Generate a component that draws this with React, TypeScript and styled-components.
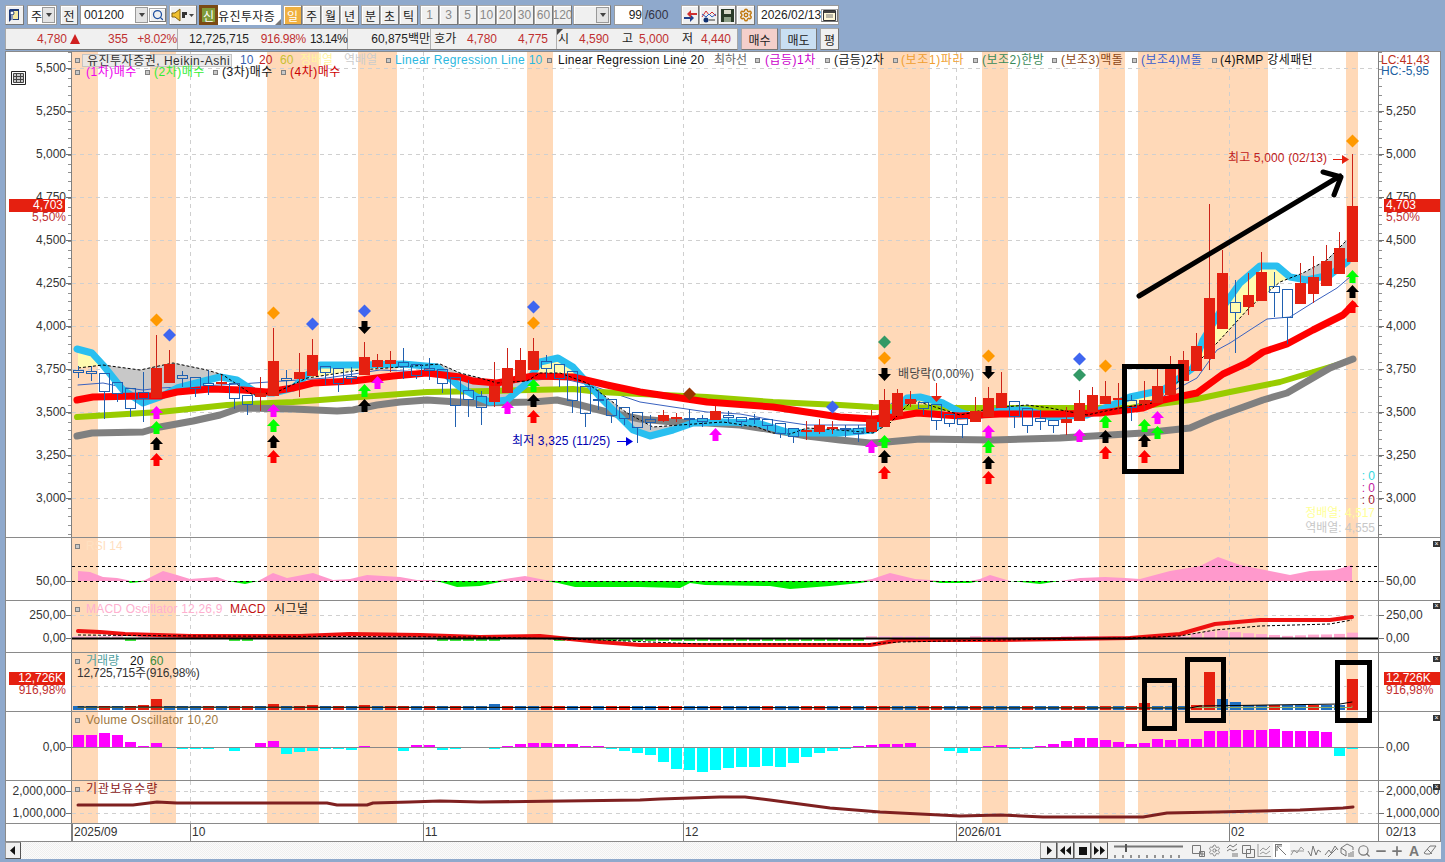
import React from "react";
import styled, { createGlobalStyle } from "styled-components";
import { Search, Settings, Minus, Plus } from "lucide-react";

const FONT = `"Liberation Sans", "Noto Sans CJK KR", sans-serif`;
const BAND = "#FFD9B8";
const RED = "#E52010";
const BLUE = "#2060B0";

type Pt = [number, number];

const Global = createGlobalStyle`
  html, body { margin: 0; padding: 0; background: #8FA9CC; }
  body { font-family: ${FONT}; font-size: 12px; color: #222; overflow: hidden; }
`;

const Page = styled.div`
  width: 1445px;
  height: 862px;
  display: flex;
  flex-direction: column;
  background: #8FA9CC;
`;

/* ---------- top toolbar ---------- */
const Toolbar = styled.div`
  display: flex;
  height: 20px;
  margin-top: 5px;
  padding-left: 5px;
  align-items: stretch;
`;

const Btn = styled.div<{ $w: number; $ml?: number; $off?: boolean; $on?: boolean }>`
  box-sizing: border-box;
  width: ${(p) => p.$w}px;
  margin-left: ${(p) => p.$ml || 0}px;
  display: flex;
  align-items: center;
  justify-content: center;
  background: ${(p) => (p.$on ? "#F0B040" : "#F0F0F0")};
  color: ${(p) => (p.$on ? "#fff" : p.$off ? "#888" : "#222")};
  border: 1px solid #A8A8A8;
  border-right-color: #777;
  border-bottom-color: #777;
  box-shadow: inset 1px 1px 0 #fff;
  overflow: hidden;
`;

const WhiteBox = styled.div<{ $w: number; $ml?: number }>`
  box-sizing: border-box;
  width: ${(p) => p.$w}px;
  margin-left: ${(p) => p.$ml || 0}px;
  display: flex;
  align-items: center;
  background: #fff;
  border: 1px solid #9A9A9A;
  padding-left: 3px;
  overflow: hidden;
`;

const Grow = styled.span`
  flex: 1;
  white-space: nowrap;
`;

const DropBtn = styled.div`
  width: 13px;
  height: 16px;
  flex: none;
  margin-right: 1px;
  display: flex;
  align-items: center;
  justify-content: center;
  background: #E4E4E4;
  border: 1px solid #999;
  box-sizing: border-box;
  &::after {
    content: "";
    border: 3px solid transparent;
    border-top: 4px solid #444;
    margin-top: 3px;
  }
`;

const NameBox = styled.div`
  box-sizing: border-box;
  width: 63px;
  display: flex;
  align-items: center;
  overflow: hidden;
  background: #fff;
  white-space: nowrap;
  font-size: 12px;
  letter-spacing: 0.4px;
  position: relative;
  &::after {
    content: "";
    position: absolute;
    right: 0;
    bottom: 0;
    border: 3px solid transparent;
    border-right-color: #777;
    border-bottom-color: #777;
  }
`;

const NewBtn = styled.div`
  box-sizing: border-box;
  width: 19px;
  margin-left: 2px;
  display: flex;
  align-items: center;
  justify-content: center;
  color: #fff;
  background: #7F9B3A;
  border: 3px solid #7B4A14;
`;

const TotalText = styled.span`
  width: 36px;
  margin-left: 2px;
  color: #334;
  line-height: 20px;
`;

const Glyph = styled.svg`
  display: block;
  flex: none;
`;

/* ---------- quote row ---------- */
const QuoteRow = styled.div`
  display: flex;
  height: 22px;
  margin-top: 3px;
  padding-left: 5px;
`;

const QuoteBar = styled.div`
  box-sizing: border-box;
  width: 733px;
  display: flex;
  align-items: center;
  background: #F0F0F0;
  border: 1px solid #A8A8A8;
  border-bottom-color: #777;
`;

const Val = styled.span<{ $w: number; $c?: string; $left?: boolean; $line?: boolean; $ls?: number }>`
  box-sizing: border-box;
  width: ${(p) => p.$w}px;
  height: 100%;
  line-height: 20px;
  text-align: ${(p) => (p.$left ? "left" : "right")};
  color: ${(p) => p.$c || "#222"};
  letter-spacing: ${(p) => p.$ls || 0}px;
  white-space: nowrap;
  border-right: ${(p) => (p.$line ? "1px solid #B0B0B0" : "none")};
`;

const UpMark = styled.span`
  flex: none;
  width: 0;
  height: 0;
  margin: 0 1px 0 3px;
  border-left: 5px solid transparent;
  border-right: 5px solid transparent;
  border-bottom: 10px solid #D02020;
`;

const OpenLabel = styled.span`
  position: relative;
  flex: none;
  width: 14px;
  height: 100%;
  margin-left: 8px;
  line-height: 20px;
  padding-left: 1px;
  box-sizing: border-box;
  white-space: nowrap;
  border-left: 1px solid #B0B0B0;
  &::before {
    content: "";
    position: absolute;
    left: 0;
    top: 0;
    border: 3px solid transparent;
    border-left-color: #444;
    border-top-color: #444;
  }
`;

const Trade = styled.div<{ $w: number; $bg: string; $ml: number }>`
  box-sizing: border-box;
  width: ${(p) => p.$w}px;
  margin-left: ${(p) => p.$ml}px;
  display: flex;
  align-items: center;
  justify-content: center;
  background: ${(p) => p.$bg};
  border: 1px solid #A8A8A8;
  border-bottom-color: #777;
  border-right-color: #777;
`;

/* ---------- chart frame and panes ---------- */
const Frame = styled.div`
  position: relative;
  box-sizing: content-box;
  width: 1434px;
  margin: 1px 0 0 5px;
  border: 1px solid #8A8A8A;
  background: #fff;
`;

const Pane = styled.div<{ $h: number }>`
  display: grid;
  grid-template-columns: 66px 1306px 62px;
  height: ${(p) => p.$h}px;
  box-sizing: border-box;
  border-bottom: 1px solid #8A8A8A;
`;

const AxisCol = styled.div<{ $side: "l" | "r"; $minor?: boolean }>`
  position: relative;
  overflow: hidden;
  box-sizing: border-box;
  ${(p) => (p.$side === "l" ? "border-right: 1px solid #808080;" : "border-left: 1px solid #808080;")}
  ${(p) =>
    p.$minor
      ? `background-image: repeating-linear-gradient(to bottom, #909090 0 1px, transparent 1px 8.6px);
         background-size: 3px 100%;
         background-repeat: no-repeat;
         background-position: ${p.$side === "l" ? "right" : "left"} top;`
      : ""}
`;

const Tick = styled.span<{ $y: number; $side: "l" | "r"; $c?: string }>`
  position: absolute;
  top: ${(p) => p.$y}px;
  ${(p) => (p.$side === "l" ? "right: 5px;" : "left: 7px;")}
  transform: translateY(-50%);
  line-height: 12px;
  white-space: nowrap;
  color: ${(p) => p.$c || "#333"};
  &::after {
    content: "";
    position: absolute;
    top: 6px;
    width: 5px;
    height: 1px;
    background: #707070;
    ${(p) => (p.$side === "l" ? "right: -5px;" : "left: -7px;")}
  }
`;

const EndDate = styled.span`
  display: block;
  padding-left: 7px;
  line-height: 17px;
  color: #333;
`;

const PriceTag = styled.span<{ $y: number; $side: "l" | "r" }>`
  position: absolute;
  top: ${(p) => p.$y}px;
  ${(p) => (p.$side === "l" ? "left: 3px; width: 56px; text-align: right; padding-right: 2px;" : "left: 5px; width: 57px; padding-left: 2px;")}
  box-sizing: border-box;
  height: 13px;
  line-height: 13px;
  color: #fff;
  background: ${RED};
`;

const PriceSub = styled.span<{ $y: number; $side: "l" | "r" }>`
  position: absolute;
  top: ${(p) => p.$y}px;
  ${(p) => (p.$side === "l" ? "right: 5px;" : "left: 7px;")}
  line-height: 12px;
  color: #C03030;
`;

const Plot = styled.div`
  position: relative;
  overflow: hidden;
`;

const Legend = styled.div<{ $top?: number }>`
  position: absolute;
  top: ${(p) => p.$top ?? 2}px;
  left: 3px;
  display: flex;
  flex-direction: column;
`;

const LegendRow = styled.div`
  display: flex;
  align-items: center;
  height: 12px;
  line-height: 12px;
  white-space: nowrap;
`;

const Mark = styled.i<{ $gap: number }>`
  display: block;
  flex: none;
  box-sizing: border-box;
  width: 5px;
  height: 5px;
  margin-right: ${(p) => p.$gap}px;
  background: #C8C8C8;
  border: 1px solid #808080;
`;

const Item = styled.span<{ $w?: number; $c: string; $ls?: number }>`
  flex: none;
  ${(p) => (p.$w ? `width: ${p.$w}px;` : "")}
  color: ${(p) => p.$c};
  letter-spacing: ${(p) => p.$ls || 0}px;
`;

const NameTag = styled.span`
  flex: none;
  box-sizing: border-box;
  width: 150px;
  height: 13px;
  margin-right: 8px;
  line-height: 12px;
  padding-left: 4px;
  letter-spacing: 0.5px;
  color: #333;
  background: rgba(232, 232, 232, 0.85);
  border: 1px solid #C4C4C4;
`;

const Note = styled.div`
  margin: 0 0 0 2px;
  line-height: 12px;
  color: #333;
  letter-spacing: -0.2px;
  white-space: nowrap;
`;

const CornerNote = styled.div<{ $c: string; $y: number }>`
  position: absolute;
  top: ${(p) => p.$y}px;
  left: 2px;
  line-height: 11px;
  color: ${(p) => p.$c};
`;

const TableIcon = styled.svg`
  position: absolute;
  left: 5px;
  top: 19px;
`;

const CloseBox = styled.span<{ $y: number }>`
  position: absolute;
  right: 0;
  top: ${(p) => p.$y}px;
  width: 7px;
  height: 6px;
  background: #333;
  color: #fff;
  font-size: 7px;
  line-height: 6px;
  text-align: center;
`;

const ValueList = styled.div`
  position: absolute;
  right: 3px;
  top: 418px;
  display: flex;
  flex-direction: column;
  align-items: flex-end;
`;

const ValueRow = styled.span<{ $c: string; $h: number }>`
  height: ${(p) => p.$h}px;
  line-height: ${(p) => p.$h}px;
  color: ${(p) => p.$c};
  white-space: nowrap;
`;

const DateRow = styled.div`
  display: grid;
  grid-template-columns: 66px 1306px 62px;
  height: 17px;
`;

const DateLabel = styled.span<{ $x: number }>`
  position: absolute;
  left: ${(p) => p.$x}px;
  top: 0;
  height: 17px;
  line-height: 17px;
  padding-left: 1px;
  border-left: 1px solid #808080;
  color: #333;
`;

const OverBox = styled.div<{ $x: number; $y: number; $w: number; $h: number }>`
  position: absolute;
  left: ${(p) => p.$x - 6}px;
  top: ${(p) => p.$y - 52}px;
  width: ${(p) => p.$w}px;
  height: ${(p) => p.$h}px;
  box-sizing: border-box;
  border: 5px solid #000;
`;

const ChartSvg = styled.svg`
  display: block;
  font-family: ${FONT};
  font-size: 12px;
`;

/* ---------- bottom scroll row ---------- */
const ScrollRow = styled.div`
  display: flex;
  height: 17px;
  margin-left: 5px;
  width: 1436px;
  align-items: stretch;
`;

const ScrollBtn = styled.div<{ $w?: number }>`
  box-sizing: border-box;
  width: ${(p) => p.$w || 16}px;
  flex: none;
  display: flex;
  align-items: center;
  justify-content: center;
  background: #F0F0F0;
  border: 1px solid #999;
  border-right-color: #555;
  border-bottom-color: #555;
`;

const Track = styled.div`
  width: 1019px;
  flex: none;
  background: repeating-conic-gradient(#EFEFEF 0 25%, #FBFBFB 0 50%) 0 0 / 2px 2px;
`;

const ToolZone = styled.div`
  flex: 1;
  display: flex;
  align-items: center;
  background: #F2F2F2;
`;

const SliderSlot = styled.span`
  flex: none;
  margin: 0 5px;
  width: 72px;
`;

const ToolIcon = styled.span<{ $on?: boolean }>`
  width: 16.6px;
  height: 16px;
  flex: none;
  display: flex;
  align-items: center;
  justify-content: center;
  color: #777;
  background: ${(p) => (p.$on ? "#fff" : "transparent")};
  font-weight: 700;
  font-size: 14px;
`;

/* ---------- data ---------- */
const X0 = 78.5;
const STEP = 13;
const bx = (i: number) => X0 + i * STEP;

// top of body, bottom of body, top of wick, bottom of wick, colour
const CANDLES: [number, number, number, number, "r" | "b"][] = [
  [370, 372, 366, 378, "b"], [371, 373, 366, 381, "b"], [373, 391, 373, 419, "b"], [382, 393, 382, 402, "b"],
  [388, 408, 388, 417, "b"], [392, 398, 372, 422, "b"], [368, 398, 335, 398, "r"], [364, 383, 350, 383, "r"],
  [375, 378, 371, 387, "b"], [377, 388, 377, 397, "b"], [383, 385, 370, 395, "b"], [382, 384, 375, 390, "r"],
  [383, 398, 383, 409, "b"], [395, 404, 395, 415, "b"], [393, 397, 377, 411, "r"], [361, 396, 328, 396, "r"],
  [378, 380, 370, 392, "b"], [372, 379, 353, 397, "r"], [355, 376, 339, 376, "r"], [366, 372, 366, 385, "b"],
  [368, 383, 368, 392, "b"], [376, 378, 367, 383, "b"], [357, 375, 342, 375, "r"], [360, 367, 354, 369, "r"],
  [360, 364, 351, 372, "r"], [362, 366, 348, 379, "b"], [364, 375, 364, 379, "b"], [368, 370, 358, 380, "b"],
  [369, 383, 369, 393, "b"], [377, 405, 377, 427, "b"], [390, 399, 380, 417, "b"], [396, 407, 391, 425, "b"],
  [386, 402, 362, 407, "r"], [368, 393, 348, 393, "r"], [360, 380, 348, 380, "r"], [351, 370, 338, 370, "r"],
  [361, 368, 355, 378, "b"], [364, 378, 364, 387, "b"], [371, 400, 371, 413, "b"], [386, 413, 386, 427, "b"],
  [399, 400, 390, 410, "b"], [399, 415, 399, 423, "b"], [407, 418, 407, 425, "b"], [412, 427, 412, 443, "b"],
  [419, 422, 415, 430, "b"], [415, 421, 410, 422, "r"], [417, 419, 413, 422, "r"], [418, 419, 409, 427, "b"],
  [418, 421, 415, 427, "b"], [411, 420, 406, 420, "r"], [415, 417, 411, 423, "b"], [417, 421, 417, 427, "b"],
  [418, 419, 414, 424, "b"], [419, 425, 419, 431, "b"], [423, 433, 423, 438, "b"], [428, 436, 428, 443, "b"],
  [430, 431, 421, 440, "r"], [425, 432, 419, 434, "r"], [427, 428, 421, 434, "r"], [428, 429, 425, 437, "b"],
  [428, 433, 425, 442, "b"], [419, 432, 410, 432, "r"], [400, 427, 389, 427, "r"], [393, 416, 389, 416, "r"],
  [399, 404, 391, 407, "r"], [402, 408, 402, 415, "b"], [404, 420, 404, 430, "b"], [414, 423, 414, 427, "b"],
  [418, 424, 418, 438, "b"], [411, 422, 397, 422, "r"], [398, 417, 387, 417, "r"], [393, 408, 372, 408, "r"],
  [401, 416, 401, 428, "b"], [408, 425, 408, 433, "b"], [418, 421, 410, 430, "b"], [420, 425, 420, 433, "b"],
  [419, 423, 407, 435, "r"], [403, 421, 390, 421, "r"], [395, 412, 387, 412, "r"], [396, 404, 381, 404, "r"],
  [398, 400, 383, 413, "r"], [400, 407, 395, 421, "b"], [400, 404, 381, 410, "r"], [386, 403, 369, 403, "r"],
  [369, 395, 356, 395, "r"], [360, 381, 351, 381, "r"], [346, 371, 333, 371, "r"], [298, 359, 204, 370, "r"],
  [273, 329, 250, 329, "r"], [302, 312, 280, 353, "b"], [295, 307, 273, 315, "r"], [272, 301, 252, 301, "r"],
  [286, 292, 272, 317, "b"], [289, 317, 289, 344, "b"], [283, 304, 263, 304, "r"], [277, 294, 256, 303, "r"],
  [261, 286, 245, 286, "r"], [248, 274, 232, 274, "r"], [206, 262, 154, 262, "r"],
];

const GRAY: Pt[] = [[77,436],[92,433],[143,432],[160,427],[193,421],[220,415],[240,408],[293,409],[337,411],[353,410],[377,405],[400,402],[427,400],[473,403],[533,402],[557,400],[580,405],[607,412],[640,419],[673,422],[707,423],[740,425],[773,430],[807,436],[840,440],[870,443],[887,442],[920,439],[993,440],[1060,438],[1110,435],[1143,433],[1190,428],[1213,418],[1263,400],[1287,393],[1330,368],[1353,359]];
const OLIVE: Pt[] = [[77,417],[160,412],[227,405],[293,402],[360,397],[427,392],[490,391],[573,389],[600,392],[640,394],[707,397],[773,402],[840,405],[873,407],[957,408],[1040,408],[1100,408],[1130,408],[1197,399],[1230,392],[1280,382],[1330,367],[1343,363]];
const REDLINE: Pt[] = [[77,400],[93,397],[140,396],[160,396],[177,392],[210,389],[243,390],[267,392],[293,388],[313,383],[353,381],[393,376],[427,373],[460,377],[473,381],[497,383],[533,376],[573,377],[607,385],[640,392],[707,402],[773,407],[840,417],[873,419],[893,417],[917,413],[960,416],[1000,414],[1060,414],[1100,413],[1143,408],[1163,400],[1197,393],[1223,374],[1247,363],[1263,352],[1287,344],[1313,330],[1343,315],[1353,305]];
const CYAN: Pt[] = [[77,349],[92,353],[103,365],[123,390],[143,403],[160,397],[177,388],[200,382],[220,377],[237,380],[257,393],[273,393],[293,388],[307,375],[320,365],[360,365],[403,364],[437,367],[460,387],[477,397],[490,402],[507,400],[527,383],[540,362],[558,358],[573,367],[600,397],[633,430],[650,436],[673,430],[693,423],[723,422],[757,423],[787,432],[807,433],[840,433],[873,430],[888,418],[907,398],[920,397],[943,403],[960,412],[975,417],[1000,410],[1027,410],[1050,417],[1087,415],[1117,403],[1130,397],[1163,390],[1193,368],[1203,340],[1223,307],[1240,283],[1260,266],[1277,266],[1290,277],[1307,280],[1330,275],[1347,262]];
const DASH: Pt[] = [[78,368],[103,365],[140,370],[173,363],[207,370],[223,375],[253,395],[277,392],[307,378],[360,370],[427,365],[440,364],[460,373],[480,378],[497,383],[527,381],[540,373],[560,373],[587,383],[610,400],[627,413],[653,427],[680,425],[723,422],[757,427],[773,433],[790,434],[807,428],[840,430],[873,433],[890,423],[913,400],[960,415],[993,408],[1027,405],[1050,408],[1087,415],[1120,408],[1153,403],[1180,380],[1217,343],[1250,307],[1280,282],[1303,273],[1327,260],[1347,240]];
const THIN: Pt[] = [[78,385],[103,383],[127,388],[143,390],[160,388],[240,384],[327,378],[380,370],[427,372],[460,377],[500,383],[560,378],[590,385],[613,393],[640,402],[673,407],[707,412],[740,414],[773,420],[807,425],[867,425],[893,402],[960,416],[1093,413],[1127,407],[1160,398],[1173,391],[1197,378],[1217,350],[1230,343],[1253,328],[1267,319],[1290,317],[1317,300],[1337,288],[1350,277]];

const RSI: Pt[] = [[78,10],[90,9],[103,4],[117,3],[127,1],[130,-2],[140,-1],[145,1],[163,10],[177,6],[190,2],[217,4],[228,0],[245,-3],[258,0],[273,8],[287,3],[313,8],[333,1],[350,2],[367,6],[400,4],[417,1],[433,1],[440,-1],[447,-3],[457,-6],[480,-5],[495,-2],[505,2],[525,5],[545,1],[558,-2],[575,-6],[640,-6],[680,-7],[690,-2],[705,-4],[770,-5],[790,-8],[830,-5],[860,-2],[872,2],[890,8],[915,2],[930,1],[940,-2],[970,-2],[980,2],[990,6],[1010,0],[1040,-3],[1060,0],[1080,3],[1105,4],[1125,3],[1140,2],[1170,10],[1200,15],[1218,24],[1240,16],[1270,10],[1290,6],[1310,10],[1335,11],[1352,16]];

const MACD: Pt[] = [[78,631],[100,632],[125,634],[190,636],[300,636],[350,634],[420,635],[480,637],[540,636],[600,642],[640,645],[800,645],[870,645],[900,640],[1000,640],[1130,638],[1180,634],[1215,624],[1260,620],[1330,620],[1352,617]];
const SIGNAL: Pt[] = [[78,635],[200,636],[480,637],[600,640],[700,644],[870,644],[900,642],[1000,640],[1130,638],[1180,636],[1215,630],[1260,626],[1330,624],[1352,620]];

const INST: Pt[] = [[78,805],[133,805],[157,802],[177,803],[327,803],[337,805],[367,805],[373,803],[410,802],[440,801],[480,802],[640,800],[660,799],[720,797],[745,797],[770,800],[830,808],[880,812],[960,816],[1000,815],[1043,817],[1143,817],[1167,813],[1217,812],[1300,810],[1343,808],[1353,807]];

// volume follows the real candles, so its colours differ from the Heikin-Ashi bodies
const VOL_H: Record<number, number> = { 5: 5, 6: 11, 15: 6, 17: 4, 18: 5, 22: 5, 24: 4, 32: 6, 45: 4, 49: 4, 62: 4, 70: 4, 82: 7, 86: 5, 87: 38, 88: 11, 89: 8, 90: 5, 91: 5, 92: 5, 93: 5, 94: 5, 95: 5, 96: 5, 97: 5, 98: 31 };
const VOL_LEFT = "bbrbrrrbbbrbrrbrbrrbrbrbrrbrbrb";
const VOL_RIGHT = "brrbbrrbbrbbbrbbrrbr";
const volColor = (i: number) => {
  if (i < VOL_LEFT.length) return VOL_LEFT[i];
  if (i >= 84) return "bbrrbbbbrbbrbbr"[i - 84] || "r";
  return VOL_RIGHT[i % VOL_RIGHT.length];
};

const VO = [12,12,14,12,5,1,4,0,-1,-1,-1,0,-3,0,4,6,-6,-4,-3,-1,-1,-2,1,0,0,-3,2,2,-2,-1,0,0,-1,1,3,4,4,3,3,1,1,-1,-3,-5,-7,-14,-21,-22,-24,-22,-20,-19,-19,-18,-19,-15,-9,-5,-3,-1,1,2,3,3,4,0,0,-3,-5,-3,1,2,-1,-1,1,3,6,9,9,7,5,3,4,8,7,8,8,16,16,17,17,17,18,16,16,16,15,-8,-1];

const BANDS: Pt[] = [[72,98],[150,176],[267,319],[358,397],[527,553],[878,930],[982,1008],[1099,1125],[1138,1268],[1346,1358]];
const MONTHS = [190, 423, 683, 956, 1229];

type ArrowKind = "red" | "black" | "lime" | "mag";
const ARROW_FILL: Record<ArrowKind, string> = { red: "#FF0000", black: "#000000", lime: "#00FF00", mag: "#FF00FF" };

const UP: [number, number, ArrowKind][] = [
  [156.5,413,"mag"],[156.5,428,"lime"],[156.5,444,"black"],[156.5,460,"red"],
  [273.5,411,"mag"],[273.5,426,"lime"],[273.5,442,"black"],[273.5,457,"red"],
  [364.5,391,"lime"],[364.5,406,"black"],[377.5,383,"mag"],
  [507.5,408,"mag"],[533.5,386,"lime"],[533.5,401,"black"],[533.5,417,"red"],
  [715.5,435,"mag"],[871.5,447,"mag"],
  [884.5,442,"lime"],[884.5,457,"black"],[884.5,473,"red"],
  [988.5,432,"mag"],[988.5,447,"lime"],[988.5,463,"black"],[988.5,478,"red"],
  [1079.5,436,"mag"],[1105.5,422,"lime"],[1105.5,437,"black"],[1105.5,453,"red"],
  [1144.5,426,"lime"],[1144.5,441,"black"],[1144.5,457,"red"],
  [1157.5,418,"mag"],[1157.5,433,"lime"],
  [1352.5,277,"lime"],[1352.5,292,"black"],[1352.5,307,"red"],
];

const DOWN: Pt[] = [[364.5,327],[884.5,374],[988.5,372]];

const DIAMONDS: [number, number, string][] = [
  [156.5,320,"#FF9900"],[169.5,335,"#3F66F0"],[273.5,313,"#FF9900"],[312.5,324,"#3F66F0"],
  [364.5,311,"#3F66F0"],[533.5,307,"#3F66F0"],[533.5,323,"#FF9900"],[689.5,394,"#993300"],
  [832.5,407,"#3F66F0"],[884.5,342,"#339966"],[884.5,358,"#FF9900"],[988.5,356,"#FF9900"],
  [1079.5,359,"#3F66F0"],[1079.5,375,"#339966"],[1105.5,366,"#FF9900"],[1352.5,141,"#FF9900"],
];

const PRICE_TICKS: [number, string][] = [
  [68,"5,500"],[111,"5,250"],[154,"5,000"],[197,"4,750"],[240,"4,500"],[283,"4,250"],
  [326,"4,000"],[369,"3,750"],[412,"3,500"],[455,"3,250"],[498,"3,000"],
];

const poly = (pts: Pt[]) => "M" + pts.map((p) => p.join(",")).join("L");

const lerp = (pts: Pt[], x: number) => {
  if (x <= pts[0][0]) return pts[0][1];
  for (let i = 1; i < pts.length; i++) {
    if (x <= pts[i][0]) {
      const [x0, y0] = pts[i - 1];
      const [x1, y1] = pts[i];
      return y0 + ((y1 - y0) * (x - x0)) / (x1 - x0);
    }
  }
  return pts[pts.length - 1][1];
};

// areas between the fast line and the dashed line, yellow or grey by which lies on top
const fillRuns = () => {
  const runs: { d: string; c: string }[] = [];
  let top: Pt[] = [];
  let bot: Pt[] = [];
  let cur = 0;
  const close = () => {
    if (top.length > 1) runs.push({ d: poly([...top, ...bot.reverse()]) + "Z", c: cur < 0 ? "#FFFBB0" : "#C8C8C8" });
    top = [];
    bot = [];
  };
  for (let x = 78; x <= 1347; x++) {
    const c = lerp(CYAN, x);
    const d = lerp(DASH, x);
    const s = c < d ? -1 : 1;
    if (s !== cur) {
      close();
      cur = s;
    }
    top.push([x, Math.min(c, d)]);
    bot.push([x, Math.max(c, d)]);
  }
  close();
  return runs;
};

const Backdrop = ({ top, h, grid = [] }: { top: number; h: number; grid?: number[] }) => (
  <>
    {BANDS.map(([a, b]) => (
      <rect key={a} x={a} y={top} width={b - a} height={h} fill={BAND} />
    ))}
    {MONTHS.map((x) => (
      <line key={x} x1={x + 0.5} x2={x + 0.5} y1={top} y2={top + h} stroke="#CFCFCF" strokeDasharray="4 4" />
    ))}
    {grid.map((y) => (
      <line key={y} x1={72} x2={1378} y1={y + 0.5} y2={y + 0.5} stroke="#CFCFCF" strokeDasharray="4 4" />
    ))}
  </>
);

const Line = ({ pts, c, w, dash }: { pts: Pt[]; c: string; w: number; dash?: string }) => (
  <path d={poly(pts)} fill="none" stroke={c} strokeWidth={w} strokeDasharray={dash} strokeLinecap={dash ? "butt" : "round"} strokeLinejoin="round" />
);

const Candle = ({ i }: { i: number }) => {
  const [t, b, wt, wb, k] = CANDLES[i];
  const x = bx(i);
  if (k === "r") {
    return (
      <g>
        <line x1={x} x2={x} y1={wt} y2={wb} stroke="#CC2218" />
        <rect x={x - 5.5} y={t} width={11} height={Math.max(b - t, 2)} fill={RED} />
      </g>
    );
  }
  return (
    <g>
      {wt < t && <line x1={x} x2={x} y1={wt} y2={t} stroke={BLUE} />}
      <line x1={x} x2={x} y1={b} y2={wb} stroke={BLUE} />
      <rect x={x - 5} y={t + 0.5} width={10} height={Math.max(b - t, 1)} fill="none" stroke={BLUE} />
    </g>
  );
};

const UpArrow = ({ x, y, c }: { x: number; y: number; c: string }) => (
  <path d={`M${x},${y - 7}L${x + 6.5},${y}H${x + 3}V${y + 6}H${x - 3}V${y}H${x - 6.5}Z`} fill={c} />
);

const DownArrow = ({ x, y }: { x: number; y: number }) => (
  <path d={`M${x},${y + 7}L${x + 6.5},${y}H${x + 3}V${y - 6}H${x - 3}V${y}H${x - 6.5}Z`} fill="#000" />
);

const Diamond = ({ x, y, c }: { x: number; y: number; c: string }) => (
  <path d={`M${x},${y - 6.5}L${x + 6.5},${y}L${x},${y + 6.5}L${x - 6.5},${y}Z`} fill={c} />
);

const MainChart = () => (
  <ChartSvg width={1306} height={485} viewBox="72 52 1306 485">
    <Backdrop top={52} h={485} grid={PRICE_TICKS.map((t) => t[0])} />
    {fillRuns().map((r, i) => (
      <path key={i} d={r.d} fill={r.c} />
    ))}
    <Line pts={THIN} c="#3A62C0" w={1} />
    <Line pts={OLIVE} c="#99CC00" w={6} />
    <Line pts={GRAY} c="#808080" w={7} />
    <Line pts={CYAN} c="#29BFF0" w={7} />
    <Line pts={REDLINE} c="#FF0000" w={7} />
    <Line pts={DASH} c="#000" w={1} dash="3 2" />
    {CANDLES.map((_, i) => (
      <Candle key={i} i={i} />
    ))}
    {UP.map(([x, y, k], i) => (
      <UpArrow key={i} x={x} y={y} c={ARROW_FILL[k]} />
    ))}
    {DOWN.map(([x, y]) => (
      <DownArrow key={x} x={x} y={y} />
    ))}
    {DIAMONDS.map(([x, y, c], i) => (
      <Diamond key={i} x={x} y={y} c={c} />
    ))}
    <path d="M936.5,383V397" stroke="#E52010" />
    <path d="M931,396H942L936.5,402Z" fill="#E52010" />
    <text x={898} y={378} fill="#444" letterSpacing={0.1}>배당락(0,00%)</text>
    <text x={1228} y={162} fill="#C02020" letterSpacing={0.15}>최고 5,000 (02/13)</text>
    <path d="M1333,159.5H1343" stroke="#E52010" />
    <path d="M1342,155L1349,159.5L1342,164Z" fill="#E52010" />
    <text x={512} y={445} fill="#0000B0" letterSpacing={0.15}>최저 3,325 (11/25)</text>
    <path d="M617,441.5H627" stroke="#0000E0" />
    <path d="M626,437L633,441.5L626,446Z" fill="#0000E0" />
    <path d="M1139,296L1340,176M1323,172L1341,177L1334,195" fill="none" stroke="#000" strokeWidth={5} strokeLinecap="round" strokeLinejoin="round" />
  </ChartSvg>
);

const RsiChart = () => {
  const xs = RSI.map((p) => p[0]);
  const pink: Pt[] = [[78, 581], ...xs.map((x): Pt => [x, 581 - Math.max(lerp(RSI, x), 0)]), [1352, 581]];
  const lime: Pt[] = [[78, 581], ...xs.map((x): Pt => [x, 581 - Math.min(lerp(RSI, x), 0)]), [1352, 581]];
  return (
    <ChartSvg width={1306} height={62} viewBox="72 538 1306 62">
      <Backdrop top={538} h={62} />
      <path d={poly(pink) + "Z"} fill="#FF99CC" />
      <path d={poly(lime) + "Z"} fill="#00F000" />
      <line x1={72} x2={1378} y1={566.5} y2={566.5} stroke="#000" strokeDasharray="3 3" />
      <line x1={72} x2={1378} y1={581.5} y2={581.5} stroke="#000" strokeDasharray="3 3" />
    </ChartSvg>
  );
};

const MacdChart = () => (
  <ChartSvg width={1306} height={51} viewBox="72 601 1306 51">
    <Backdrop top={601} h={51} grid={[615]} />
    {CANDLES.map((_, i) => {
      const h = lerp(RSI, bx(i));
      if (i > 85) return <rect key={i} x={bx(i) - 5.5} y={638 - h / 3} width={11} height={h / 3} fill="#FFA8D0" />;
      if (h < 0) return <rect key={i} x={bx(i) - 5.5} y={639} width={11} height={2} fill="#40E040" />;
      return <rect key={i} x={bx(i) - 5.5} y={636} width={11} height={2} fill="#FFC0DC" />;
    })}
    <Line pts={MACD} c="#EE1010" w={4} />
    <Line pts={SIGNAL} c="#000" w={1} dash="3 2" />
    <line x1={72} x2={1378} y1={638.5} y2={638.5} stroke="#000" strokeWidth={2} />
  </ChartSvg>
);

const VolumeChart = () => (
  <ChartSvg width={1306} height={58} viewBox="72 653 1306 58">
    <Backdrop top={653} h={58} grid={[686]} />
    {CANDLES.map((_, i) => {
      const h = VOL_H[i] || 4;
      return <rect key={i} x={bx(i) - 5.5} y={710 - h} width={11} height={h} fill={volColor(i) === "r" ? RED : "#1F6FC0"} />;
    })}
    <Line pts={[[78, 707.5], [1352, 707.5], [1352, 706]]} c="#88AA66" w={1} />
    <Line pts={[[78, 707], [1190, 708], [1200, 706], [1340, 704], [1352, 702]]} c="#000" w={1} />
  </ChartSvg>
);

const VoChart = () => (
  <ChartSvg width={1306} height={68} viewBox="72 712 1306 68">
    <Backdrop top={712} h={68} />
    <line x1={72} x2={1378} y1={747.5} y2={747.5} stroke="#888" />
    {VO.map((v, i) =>
      v === 0 ? null : (
        <rect key={i} x={bx(i) - 5.5} y={v > 0 ? 747 - v : 748} width={11} height={Math.abs(v)} fill={v > 0 ? "#FF00FF" : "#00FFFF"} />
      )
    )}
  </ChartSvg>
);

const InstChart = () => (
  <ChartSvg width={1306} height={42} viewBox="72 781 1306 42">
    <Backdrop top={781} h={42} grid={[791, 813]} />
    <Line pts={INST} c="#7F2020" w={3} />
  </ChartSvg>
);

const BookIcon = () => (
  <Glyph width={15} height={15} viewBox="0 0 15 15">
    <path d="M3 1h9v11H4l-2 2V2z" fill="#1E3A78" />
    <path d="M6 3h5v8H6z" fill="#F4E7A0" />
    <circle cx={5} cy={5} r={2} fill="#fff" stroke="#1E3A78" />
    <path d="M5 7v5" stroke="#fff" />
  </Glyph>
);

const SpeakerIcon = () => (
  <Glyph width={24} height={14} viewBox="0 0 24 14">
    <path d="M1 5h3l5-4v12l-5-4H1z" fill="#F0C030" stroke="#806010" />
    <path d="M11 4h3v6h-3zM14 4h2v3h-2z" fill="#333" />
    <path d="M18 6h5l-2.5 3z" fill="#444" />
  </Glyph>
);

const SwapIcon = () => (
  <Glyph width={15} height={15} viewBox="0 0 15 15">
    <path d="M1 9h6V6l4 4-4 4v-3H1z" fill="#20408C" />
    <path d="M14 5H8V2L4 6l4 4V7h6z" fill="#D03030" />
  </Glyph>
);

const TrendIcon = () => (
  <Glyph width={16} height={15} viewBox="0 0 16 15">
    <path d="M1 9l4-6 3 4 3-3 4 4" fill="none" stroke="#D03030" />
    <path d="M1 6l4 3 3-3 3 3 4-3" fill="none" stroke="#3060C0" />
    <circle cx={5} cy={12} r={2.5} fill="#103070" />
    <path d="M8 12h6" stroke="#333" />
  </Glyph>
);

const SaveIcon = () => (
  <Glyph width={15} height={15} viewBox="0 0 15 15">
    <path d="M1 1h13v13H1z" fill="#2A3A28" />
    <path d="M4 2h7v4H4z" fill="#D8D8C8" />
    <path d="M4 9h7v5H4z" fill="#8FA088" />
  </Glyph>
);

const CalIcon = () => (
  <Glyph width={13} height={11} viewBox="0 0 13 11">
    <path d="M.5.5h12v10H.5z" fill="#FFF8D8" stroke="#333" />
    <path d="M1 1h11v2H1z" fill="#444" />
    <path d="M3 5h7M3 7h7" stroke="#777" />
  </Glyph>
);

const BarTool = ({ d, stroke = "#777" }: { d: string; stroke?: string }) => (
  <Glyph width={15} height={15} viewBox="0 0 15 15">
    <path d={d} fill="none" stroke={stroke} />
  </Glyph>
);

const TimeSlider = () => (
  <Glyph width={72} height={15} viewBox="0 0 72 15">
    <path d="M1 3.5H70" stroke="#777" strokeWidth={2} />
    <path d="M13 1V9" stroke="#555" strokeWidth={2} />
    <path d="M2 12v3M10 12v3M18 12v3M26 12v3M34 12v3M42 12v3M50 12v3M58 12v3M66 12v3" stroke="#333" />
  </Glyph>
);

const BarBtn = ({ label }: { label: string }) => (
  <Btn $w={19}>{label}</Btn>
);

const PriceAxis = ({ side }: { side: "l" | "r" }) => (
  <AxisCol $side={side} $minor>
    {PRICE_TICKS.filter((t) => side === "l" || t[0] > 68).map(([y, s]) => (
      <Tick key={y} $y={y - 52} $side={side}>{s}</Tick>
    ))}
    <PriceTag $y={147} $side={side}>4,703</PriceTag>
    <PriceSub $y={159} $side={side}>5,50%</PriceSub>
    {side === "l" && (
      <TableIcon width={15} height={14} viewBox="0 0 15 14">
        <path d="M.5.5h14v13H.5z" fill="#fff" stroke="#222" />
        <path d="M2.5 2.5h10v9h-10zM2.5 5.5h10M2.5 8.5h10M5.5 2.5v9M9.5 2.5v9" fill="#C8C8C8" stroke="#444" />
      </TableIcon>
    )}
    {side === "r" && (
      <>
        <CornerNote $y={3} $c="#C03020">LC:41,43</CornerNote>
        <CornerNote $y={14} $c="#2060A0">HC:-5,95</CornerNote>
      </>
    )}
  </AxisCol>
);

export default function App() {
  return (
    <Page>
      <Global />
      <Toolbar>
        <Btn $w={19}><BookIcon /></Btn>
        <WhiteBox $w={30} $ml={3}><Grow>주</Grow><DropBtn /></WhiteBox>
        <Btn $w={18} $ml={3}>전</Btn>
        <WhiteBox $w={87} $ml={2}>
          <Grow>001200</Grow>
          <DropBtn />
          <Btn $w={17}><Search size={12} color="#2050A0" strokeWidth={2.5} /></Btn>
        </WhiteBox>
        <Btn $w={28} $ml={2}><SpeakerIcon /></Btn>
        <NewBtn>신</NewBtn>
        <NameBox>유진투자증</NameBox>
        <Btn $w={19} $ml={2} $on>일</Btn>
        {["주", "월", "년"].map((s) => <BarBtn key={s} label={s} />)}
        <Btn $w={19} $ml={2}>분</Btn>
        <BarBtn label="초" />
        <BarBtn label="틱" />
        <Btn $w={19} $ml={2} $off>1</Btn>
        {["3", "5", "10", "20", "30", "60", "120"].map((s) => (
          <Btn key={s} $w={19} $off>{s}</Btn>
        ))}
        <Btn $w={38} $ml={1}><Grow /><DropBtn /></Btn>
        <WhiteBox $w={29} $ml={3}><Grow /><span>99</span></WhiteBox>
        <TotalText>/600</TotalText>
        <Btn $w={18}><SwapIcon /></Btn>
        <Btn $w={19}><TrendIcon /></Btn>
        <Btn $w={18}><SaveIcon /></Btn>
        <Btn $w={19}><Settings size={14} color="#C07810" strokeWidth={2.5} /></Btn>
        <WhiteBox $w={82} $ml={2}><Grow>2026/02/13</Grow><Btn $w={17}><CalIcon /></Btn></WhiteBox>
      </Toolbar>

      <QuoteRow>
        <QuoteBar>
          <Val $w={61} $c="#C03030">4,780</Val>
          <UpMark />
          <Val $w={47} $c="#C03030">355</Val>
          <Val $w={50} $c="#C03030" $ls={-0.2} $line>+8.02%</Val>
          <Val $w={71}>12,725,715</Val>
          <Val $w={57} $c="#C03030" $ls={-0.3}>916.98%</Val>
          <Val $w={42} $ls={-0.6} $line>13.14%</Val>
          <Val $w={83} $line>60,875백만</Val>
          <Val $w={34} $left>&nbsp;호가</Val>
          <Val $w={32} $c="#C03030">4,780</Val>
          <Val $w={51} $c="#C03030">4,775</Val>
          <OpenLabel>시</OpenLabel>
          <Val $w={39} $c="#C03030">4,590</Val>
          <Val $w={24}>고</Val>
          <Val $w={36} $c="#C03030">5,000</Val>
          <Val $w={24}>저</Val>
          <Val $w={38} $c="#C03030">4,440</Val>
        </QuoteBar>
        <Trade $w={37} $ml={3} $bg="#F4CFCB">매수</Trade>
        <Trade $w={37} $ml={2} $bg="#C9DFF2">매도</Trade>
        <Trade $w={19} $ml={3} $bg="#F0F0F0">평</Trade>
      </QuoteRow>

      <Frame>
        <Pane $h={486}>
          <PriceAxis side="l" />
          <Plot>
            <MainChart />
            <Legend>
              <LegendRow>
                <Mark $gap={2} />
                <NameTag>유진투자증권, Heikin-Ashi</NameTag>
                <Item $w={19} $c="#3A5FB0">10</Item>
                <Item $w={21} $c="#C02020">20</Item>
                <Item $w={20} $c="#C8C030">60</Item>
                <Item $w={44} $c="#FFF4A0">정배열</Item>
                <Item $w={42} $c="#CCCCCC">역배열</Item>
                <Mark $gap={4} />
                <Item $w={152} $c="#2CB8E0" $ls={0.3}>Linear Regression Line 10</Item>
                <Mark $gap={6} />
                <Item $w={156} $c="#111" $ls={0.25}>Linear Regression Line 20</Item>
                <Item $w={41} $c="#666">최하선</Item>
                <Mark $gap={5} />
                <Item $w={60} $c="#CC00CC" $ls={0.5}>(급등)1차</Item>
                <Mark $gap={4} />
                <Item $w={59} $c="#111" $ls={0.4}>(급등)2차</Item>
                <Mark $gap={3} />
                <Item $w={72} $c="#F0A030" $ls={0.6}>(보조1)파라</Item>
                <Mark $gap={4} />
                <Item $w={70} $c="#3A8A5A" $ls={0.5}>(보조2)한방</Item>
                <Mark $gap={4} />
                <Item $w={71} $c="#8B4513" $ls={0.5}>(보조3)맥돌</Item>
                <Mark $gap={4} />
                <Item $w={71} $c="#3A5FCD" $ls={0.5}>(보조4)M돌</Item>
                <Mark $gap={3} />
                <Item $c="#111" $ls={0.4}>(4)RMP 강세패턴</Item>
              </LegendRow>
              <LegendRow>
                <Mark $gap={6} />
                <Item $w={59} $c="#EE00EE" $ls={0.5}>(1차)매수</Item>
                <Mark $gap={4} />
                <Item $w={59} $c="#33EE33" $ls={0.5}>(2차)매수</Item>
                <Mark $gap={4} />
                <Item $w={59} $c="#111" $ls={0.5}>(3차)매수</Item>
                <Mark $gap={4} />
                <Item $c="#CC0000" $ls={0.5}>(4차)매수</Item>
              </LegendRow>
            </Legend>
            <ValueList>
              <ValueRow $c="#30D8E0" $h={12}>: 0</ValueRow>
              <ValueRow $c="#C020A0" $h={12}>: 0</ValueRow>
              <ValueRow $c="#A02030" $h={12}>: 0</ValueRow>
              <ValueRow $c="#FFFF99" $h={15}>정배열: 4,517</ValueRow>
              <ValueRow $c="#C8C8C8" $h={14}>역배열: 4,555</ValueRow>
            </ValueList>
          </Plot>
          <PriceAxis side="r" />
        </Pane>

        <Pane $h={63}>
          <AxisCol $side="l"><Tick $y={43} $side="l">50,00</Tick></AxisCol>
          <Plot>
            <RsiChart />
            <Legend><LegendRow><Mark $gap={6} /><Item $c="#FFE0C0">RSI 14</Item></LegendRow></Legend>
          </Plot>
          <AxisCol $side="r">
            <Tick $y={43} $side="r">50,00</Tick>
            <CloseBox $y={3}>×</CloseBox>
          </AxisCol>
        </Pane>

        <Pane $h={52}>
          <AxisCol $side="l">
            <Tick $y={14} $side="l">250,00</Tick>
            <Tick $y={37} $side="l">0,00</Tick>
          </AxisCol>
          <Plot>
            <MacdChart />
            <Legend>
              <LegendRow>
                <Mark $gap={6} />
                <Item $w={144} $c="#FFB0D0" $ls={0.2}>MACD Oscillator 12,26,9</Item>
                <Item $w={44} $c="#C01010">MACD</Item>
                <Item $c="#111" $ls={0.5}>시그널</Item>
              </LegendRow>
            </Legend>
          </Plot>
          <AxisCol $side="r">
            <Tick $y={14} $side="r">250,00</Tick>
            <Tick $y={37} $side="r">0,00</Tick>
            <CloseBox $y={2}>×</CloseBox>
          </AxisCol>
        </Pane>

        <Pane $h={59}>
          <AxisCol $side="l">
            <PriceTag $y={19} $side="l">12,726K</PriceTag>
            <PriceSub $y={31} $side="l">916,98%</PriceSub>
          </AxisCol>
          <Plot>
            <VolumeChart />
            <Legend>
              <LegendRow>
                <Mark $gap={6} />
                <Item $w={44} $c="#4FA0A0">거래량</Item>
                <Item $w={20} $c="#111">20</Item>
                <Item $c="#3A8A3A">60</Item>
              </LegendRow>
              <Note>12,725,715주(916,98%)</Note>
            </Legend>
          </Plot>
          <AxisCol $side="r">
            <PriceTag $y={19} $side="r">12,726K</PriceTag>
            <PriceSub $y={31} $side="r">916,98%</PriceSub>
            <CloseBox $y={3}>×</CloseBox>
          </AxisCol>
        </Pane>

        <Pane $h={69}>
          <AxisCol $side="l"><Tick $y={35} $side="l">0,00</Tick></AxisCol>
          <Plot>
            <VoChart />
            <Legend><LegendRow><Mark $gap={6} /><Item $c="#A07840" $ls={0.25}>Volume Oscillator 10,20</Item></LegendRow></Legend>
          </Plot>
          <AxisCol $side="r">
            <Tick $y={35} $side="r">0,00</Tick>
            <CloseBox $y={3}>×</CloseBox>
          </AxisCol>
        </Pane>

        <Pane $h={43}>
          <AxisCol $side="l">
            <Tick $y={10} $side="l">2,000,000</Tick>
            <Tick $y={32} $side="l">1,000,000</Tick>
          </AxisCol>
          <Plot>
            <InstChart />
            <Legend><LegendRow><Mark $gap={6} /><Item $c="#8B2020" $ls={1}>기관보유수량</Item></LegendRow></Legend>
          </Plot>
          <AxisCol $side="r">
            <Tick $y={10} $side="r">2,000,000</Tick>
            <Tick $y={32} $side="r">1,000,000</Tick>
            <CloseBox $y={3}>×</CloseBox>
          </AxisCol>
        </Pane>

        <DateRow>
          <AxisCol $side="l" />
          <Plot>
            <DateLabel $x={0}>2025/09</DateLabel>
            {MONTHS.map((x, i) => (
              <DateLabel key={x} $x={x - 72}>{["10", "11", "12", "2026/01", "02"][i]}</DateLabel>
            ))}
          </Plot>
          <AxisCol $side="r"><EndDate>02/13</EndDate></AxisCol>
        </DateRow>

        <OverBox $x={1122} $y={364} $w={62} $h={110} />
        <OverBox $x={1142} $y={678} $w={35} $h={53} />
        <OverBox $x={1185} $y={657} $w={41} $h={66} />
        <OverBox $x={1335} $y={660} $w={37} $h={63} />
      </Frame>

      <ScrollRow>
        <ScrollBtn>
          <Glyph width={6} height={9} viewBox="0 0 6 9"><path d="M5 0v9L0 4.5z" fill="#111" /></Glyph>
        </ScrollBtn>
        <Track />
        <ScrollBtn $w={17}><Glyph width={6} height={9} viewBox="0 0 6 9"><path d="M1 0v9l5-4.5z" fill="#111" /></Glyph></ScrollBtn>
        <ScrollBtn $w={17}><Glyph width={11} height={9} viewBox="0 0 11 9"><path d="M5 0v9L0 4.5zM11 0v9L6 4.5z" fill="#111" /></Glyph></ScrollBtn>
        <ScrollBtn $w={17}><Glyph width={8} height={8} viewBox="0 0 8 8"><path d="M0 0h8v8H0z" fill="#111" /></Glyph></ScrollBtn>
        <ScrollBtn $w={17}><Glyph width={11} height={9} viewBox="0 0 11 9"><path d="M0 0v9l5-4.5zM6 0v9l5-4.5z" fill="#111" /></Glyph></ScrollBtn>
        <ToolZone>
          <SliderSlot><TimeSlider /></SliderSlot>
          <ToolIcon><BarTool d="M1.5 2.5h8v8h-8zM8.5 8.5h5v5h-5zM11 8.5v5M8.5 11h5" /></ToolIcon>
          <ToolIcon><Settings size={13} strokeWidth={1.6} /></ToolIcon>
          <ToolIcon><BarTool d="M3 5l3-3 3 2 4-3M3 8l3-2 3 2 4-2M8 11h6M8 13h6" /></ToolIcon>
          <ToolIcon><BarTool d="M1.5 2.5h8v8h-8zM5.5 6.5h8v8h-8z" /></ToolIcon>
          <ToolIcon><BarTool d="M1 13.5h13M1 1v13M3 8l3-3 3 2 4-4M3 11l3-2 3 2 4-3" stroke="#999" /></ToolIcon>
          <ToolIcon $on><BarTool d="M1 1.5h7M1.5 1v13M3 3l9 9M3 3h5M3 3v5" /></ToolIcon>
          <ToolIcon><BarTool d="M1 12l3-5 3 3 4-6 3 3M1 8h13" stroke="#999" /></ToolIcon>
          <ToolIcon><BarTool d="M1 8l3 5 2-10 3 9 2-5 3 2" /></ToolIcon>
          <ToolIcon><BarTool d="M1 12l4-5 2 3 4-7 3 4M4 14L13 5" /></ToolIcon>
          <ToolIcon><BarTool d="M1 5l6-4 6 3v3M1 5v5l5 3M1 5l5 3v5M9 10v4M11 9v5M13 8v6" /></ToolIcon>
          <ToolIcon><Search size={14} strokeWidth={2} /></ToolIcon>
          <ToolIcon><Minus size={14} strokeWidth={3} /></ToolIcon>
          <ToolIcon><Plus size={14} strokeWidth={3} /></ToolIcon>
          <ToolIcon>A</ToolIcon>
          <ToolIcon><BarTool d="M1 10l6-7h6l-6 8H3zM4 6l5 5" /></ToolIcon>
        </ToolZone>
      </ScrollRow>
    </Page>
  );
}
